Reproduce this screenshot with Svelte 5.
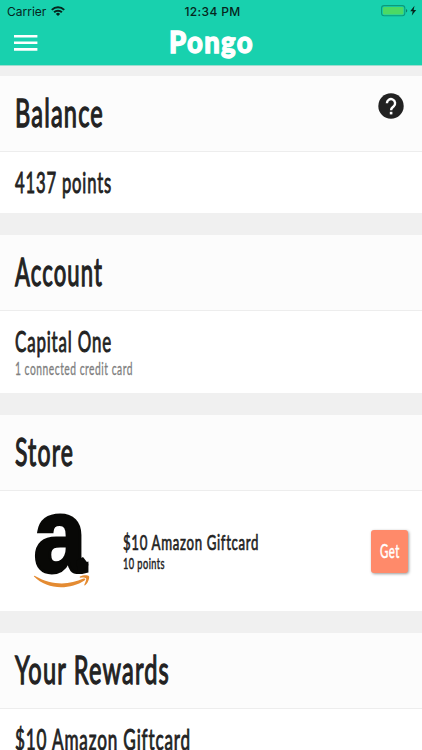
<script lang="ts">
  const store = { name: "$10 Amazon Giftcard", cost: "10 points" };
</script>

<!-- Condensed lettering: the text is squeezed to a fixed width and sits on the box's bottom edge -->
{#snippet label(text: string, width: number, height: number, kind: string)}
  <svg class="label {kind}" {width} {height}>
    <text x="0" y={height} textLength={width} lengthAdjust="spacingAndGlyphs">{text}</text>
  </svg>
{/snippet}

<div class="screen">
  <header>
    <div class="status">
      <div class="carrier">
        <span>Carrier</span>
        <svg width="14" height="10" viewBox="0 0 14 10">
          <g fill="none" stroke="#06251d" stroke-width="2">
            <path d="M0.8 3.9a8.8 8.8 0 0 1 12.4 0" />
            <path d="M3.1 6.3a5.5 5.5 0 0 1 7.8 0" />
          </g>
          <path d="M4.9 7.9a3 3 0 0 1 4.2 0L7 10z" fill="#06251d" />
        </svg>
      </div>
      <span class="time">12:34 PM</span>
      <svg class="battery" width="37" height="12" viewBox="0 0 37 12">
        <rect x="0.6" y="0.6" width="23.2" height="10.2" rx="2.5" fill="none" stroke="#0b9a7b" stroke-width="1.1" />
        <rect x="2" y="2" width="20.4" height="7.4" rx="1.2" fill="#4cd964" />
        <path d="M25 4c1.7 0.5 1.7 3 0 3.5z" fill="#0b8068" />
        <path d="M33.5 0.8L29.2 6.3h2.5L30.8 10.6L35.2 5h-2.6z" fill="#06251d" />
      </svg>
    </div>
    <div class="nav">
      <svg class="menu" width="24" height="16" viewBox="0 0 24 16">
        <path d="M0 1.2h23.4M0 7.8h23.4M0 14.4h23.4" stroke="#fff" stroke-width="2.6" />
      </svg>
      {@render label("Pongo", 85, 22, "brand")}
    </div>
  </header>

  <main>
    <section>
      <div class="heading">
        {@render label("Balance", 89, 27, "title")}
        <svg class="help" width="26" height="26" viewBox="0 0 26 26">
          <circle cx="13" cy="13" r="12.7" fill="#222" />
          <path d="M8.9 10.2a4.1 4.1 0 1 1 6.8 3.1c-1.5 1.3-2.6 1.9-2.6 4" fill="none" stroke="#fff" stroke-width="2.4" />
          <rect x="11.8" y="18.8" width="2.6" height="2.6" fill="#fff" />
        </svg>
      </div>
      <div class="row balance">
        {@render label("4137 points", 97, 20, "item")}
      </div>
    </section>

    <section>
      <div class="heading">
        {@render label("Account", 88, 27, "title")}
      </div>
      <div class="row account">
        {@render label("Capital One", 97, 20, "item")}
        {@render label("1 connected credit card", 118, 12, "note")}
      </div>
    </section>

    <section>
      <div class="heading">
        {@render label("Store", 59, 27, "title")}
      </div>
      <div class="row store">
        <svg class="logo" width="60" height="78" viewBox="0 0 60 78">
          <text x="0.5" y="59.5" textLength="53" lengthAdjust="spacingAndGlyphs">a</text>
          <path d="M43 49L50 45L55 51.5Q56 53 54.7 54.3L48.5 60.3Q46.5 61.5 45 59.5Z" fill="#080806" />
          <path d="M1 64.6Q0.5 63.4 2 64C20 74 36 73 50.5 66.6C52.6 65.9 53 67.2 51.5 68.4C37 78 14 78 1 64.6Z" fill="#e48b32" />
          <path d="M47 64.6C50 62.7 55 62.9 56 64.2C56.8 66 55 71 52.2 73.3C51.2 73.8 51.1 73 51.5 72.2C52.5 70 53.8 67.2 53 66.3C52.2 65.4 49.5 65.5 47.8 65.7C46.7 65.8 46.3 65.2 47 64.6Z" fill="#e48b32" />
        </svg>
        <div class="offer">
          {@render label(store.name, 136, 16, "product")}
          {@render label(store.cost, 42, 10, "cost")}
        </div>
        <button>{@render label("Get", 20, 14, "get")}</button>
      </div>
    </section>

    <section>
      <div class="heading">
        {@render label("Your Rewards", 155, 27, "title")}
      </div>
      <div class="row rewards">
        {@render label(store.name, 176, 20, "item")}
      </div>
    </section>
  </main>
</div>

<style>
  :global(body) {
    margin: 0;
    overflow: hidden;
  }

  .screen {
    box-sizing: border-box;
    width: 422px;
    height: 750px;
    overflow: hidden;
    background: #f0f0f0;
    color: #222;
    font-family: Lato, sans-serif;
  }

  svg {
    display: block;
    flex-shrink: 0;
    overflow: visible;
  }

  header {
    height: 65px;
    background: #18d1ae;
    border-bottom: 1px solid #9fddcf;
  }

  .status {
    display: grid;
    grid-template-columns: 1fr auto 1fr;
    align-items: center;
    height: 22px;
    padding: 0 4px 0 7px;
    color: #06251d;
    font: 12px Inter, sans-serif;
  }

  .carrier {
    display: flex;
    align-items: center;
    gap: 5px;
  }

  .time {
    font-weight: 500;
    letter-spacing: 0.35px;
  }

  .battery {
    justify-self: end;
  }

  .nav {
    display: flex;
    gap: 131px;
    padding: 9px 14px 0;
  }

  .menu {
    margin-top: 4px;
  }

  .label {
    fill: currentColor;
    stroke: currentColor;
    letter-spacing: 0.05em;
  }

  .brand {
    color: #fff;
    font-size: 31px;
    font-weight: 900;
    stroke-width: 1.3px;
  }

  .title {
    font-size: 38px;
    stroke-width: 1.3px;
  }

  .item {
    font-size: 28px;
    stroke-width: 0.9px;
  }

  .note {
    color: #808080;
    font-size: 17px;
    stroke-width: 0.3px;
  }

  .product {
    font-size: 22px;
    stroke-width: 0.7px;
  }

  .cost {
    font-size: 14.5px;
    stroke-width: 0.5px;
  }

  .get {
    font-size: 19px;
    stroke-width: 0.5px;
  }

  main {
    display: flex;
    flex-direction: column;
    gap: 21.5px;
    padding-top: 9.5px;
  }

  .heading {
    box-sizing: border-box;
    display: flex;
    justify-content: space-between;
    height: 76.5px;
    padding: 24px 18px 0 15px;
    background: #fcfcfc;
    border-bottom: 1px solid #ededed;
  }

  .help {
    margin-top: -7px;
  }

  .row {
    box-sizing: border-box;
    padding-left: 14.5px;
    background: #fff;
  }

  .balance {
    height: 61px;
    padding-top: 20.5px;
  }

  .account {
    display: flex;
    flex-direction: column;
    gap: 11px;
    height: 82px;
    padding-top: 20.5px;
  }

  .store {
    display: flex;
    align-items: center;
    height: 120px;
    padding: 0 14px 0 33px;
  }

  .logo text {
    fill: #080806;
    stroke: #080806;
    stroke-width: 3px;
    font: bold 105px "Liberation Sans", sans-serif;
  }

  .offer {
    display: flex;
    flex-direction: column;
    gap: 9px;
    margin: 0 auto 0 29.5px;
  }

  button {
    display: flex;
    align-items: center;
    justify-content: center;
    width: 37px;
    height: 43px;
    padding: 0;
    border: 0;
    border-radius: 3px;
    background: #ff8a6a;
    box-shadow: 1px 1px 3px #0006;
    color: #fff;
    font-family: inherit;
  }

  .rewards {
    height: 80px;
    padding-top: 20.5px;
  }
</style>
